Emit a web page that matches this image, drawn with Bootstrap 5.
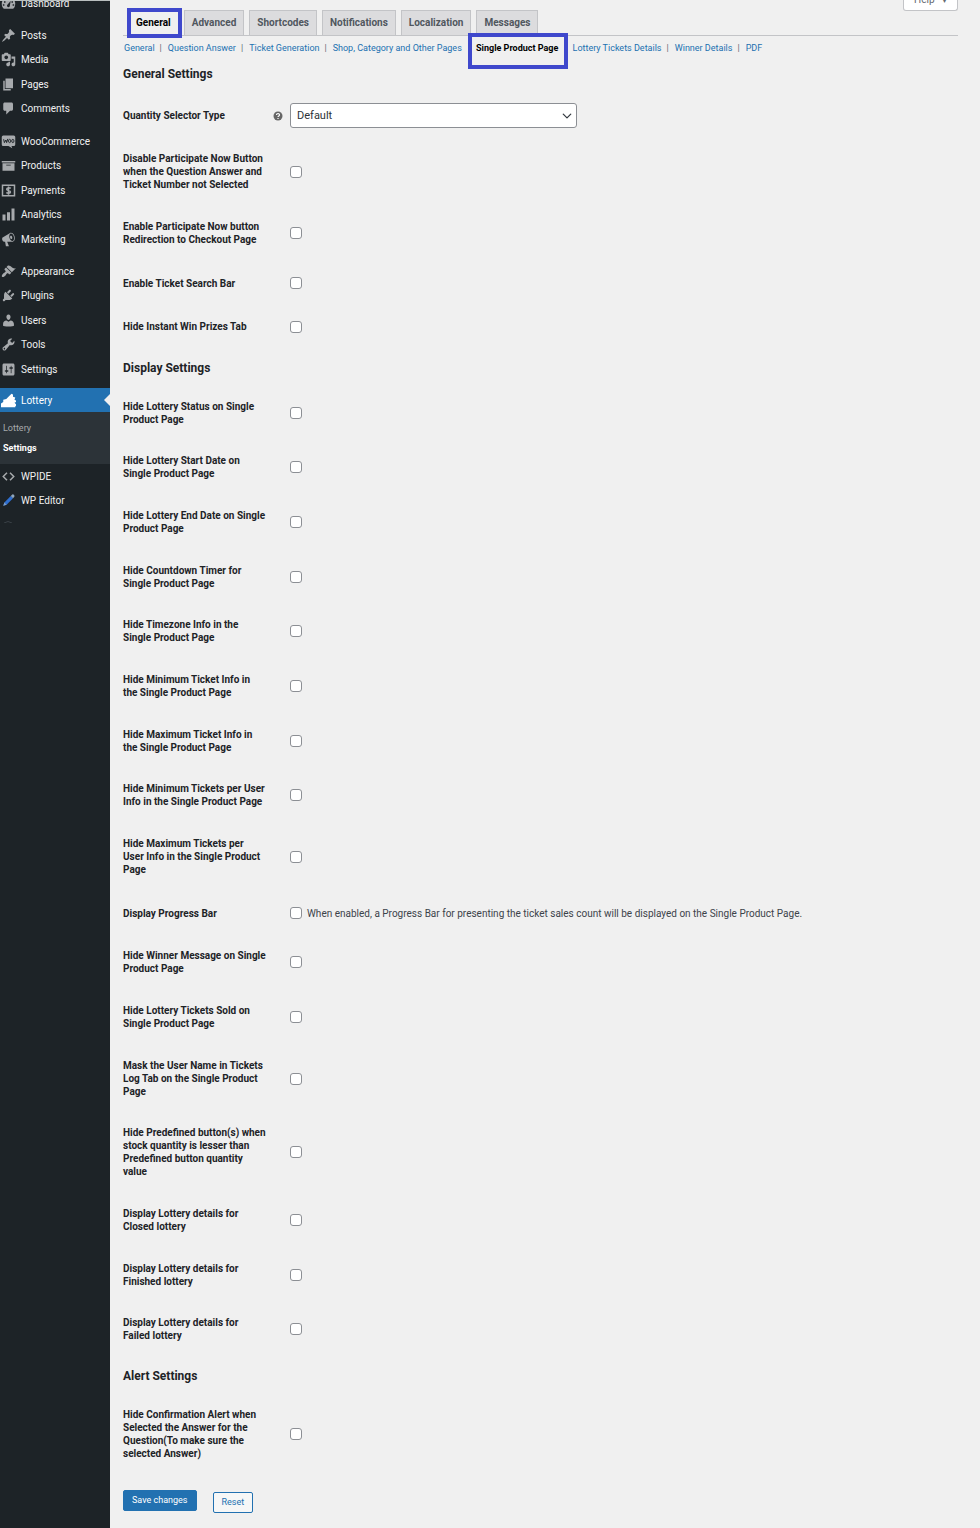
<!DOCTYPE html>
<html lang="en">
<head>
<meta charset="utf-8">
<meta name="viewport" content="width=device-width, initial-scale=1">
<title>Lottery Settings</title>
<link href="https://cdn.jsdelivr.net/npm/bootstrap@5.3.0/dist/css/bootstrap.min.css" rel="stylesheet">
<style>
body { font-family: Roboto, sans-serif; font-size: 10px; line-height: 13px; background: #f0f0f0; color: #3c434a; }
a { text-decoration: none; }

/* admin menu */
.admin-menu { flex: 0 0 110px; background: #1d2327; border-top: 1px solid #b9bfbf; overflow: hidden; font-size: 10px; }
.admin-menu ul { margin-bottom: 8px; }
.admin-menu ul.menu-first { margin-top: -10px; }
.admin-menu ul.menu-tight { margin-bottom: 7px; }
.menu-link { display: flex; align-items: center; height: 24px; gap: 5px; padding-left: 1px; color: #f0f0f1; }
.menu-list > li:nth-child(even) .menu-link { height: 25px; }
.menu-link svg { width: 15px; height: 15px; fill: #a7aaad; flex: none; }
.menu-current { background: #2271b1; position: relative; color: #fff; }
.menu-current svg { fill: #fff; }
.menu-current::after { content: ""; position: absolute; right: 0; top: 6px; border: 6px solid transparent; border-right-color: #f0f0f0; border-left: 0; }
.submenu { background: #2c3338; padding: 6px 0 6px 3px; font-size: 9px; }
.submenu a { display: block; line-height: 20px; color: #a7aaad; }
.submenu a.submenu-current { color: #fff; font-weight: 700; }

/* tabs */
.settings-main { padding: 0 22px 14px 13px; }
.help-toggle { height: 12px; width: 55px; padding: 0; margin-top: -1px; overflow: hidden; background: #fff; border: 1px solid #c3c4c7; border-top: 0; border-radius: 0 0 3px 3px; color: #646970; font-size: 10px; line-height: 2px; }
.help-toggle span { display: block; height: 11px; }
.tab-bar { border-bottom: 1px solid #c3c4c7; gap: 5px; padding-left: 5px; margin-top: -1px; font-size: 10px; font-weight: 700; }
.tab-bar a { background: #dcdcde; border: 1px solid #c3c4c7; border-bottom: 0; padding: 0 7px; line-height: 24px; color: #50575e; }
.tab-bar a.tab-current { background: #f0f0f0; color: #000; border: 0; padding: 1px 8px 0; position: relative; }
.tab-current::before, .section-current::before { content: ""; position: absolute; border: 4px solid #3f48cc; }
.tab-current::before { inset: -2px -3px -3px -1px; }
.section-links { padding: 6px 0 0 1px; font-size: 9px; }
.section-links a { color: #2271b1; }
.section-links a.section-current { color: #000; font-weight: 700; position: relative; }
.section-current::before { inset: -9px -10px -14px -8px; }
.section-links .bar { color: #646970; padding: 0 6px 0 5px; }
.section-links .bar-wide { padding: 0 6px; }

/* form */
h2 { font-size: 12px; line-height: 16px; font-weight: 700; color: #1d2327; margin: 11px 0 10px; }
.field { padding: 14px 0 15px; min-height: 44px; display: flex; align-items: center; }
.field:nth-child(3n+1) { padding-bottom: 14px; }
.field.field-select { padding: 11px 0 10px; }
.field-name { width: 143px; margin-right: 3px; flex: none; font-weight: 700; color: #1d2327; }
.field-help { width: 21px; flex: none; padding-left: 4px; }
.field-help svg { display: block; }
.field .form-check-input { margin: 0 5px 0 0; width: 12px; height: 12px; border: 1px solid #8c8f94; border-radius: 3px; flex: none; background-color: #fff; }
.field .form-select { width: 287px; height: 25px; font-size: 11px; line-height: 13px; padding: 0 20px 0 6px; border: 1px solid #8c8f94; border-radius: 3px; color: #2c3338; background-size: 10px 10px; background-position: right 4px center; }
.btn-save, .btn-reset { font-size: 9px; line-height: 13px; padding: 3px 8px; border: 1px solid #2271b1; border-radius: 2px; }
.btn-save { background: #2271b1; color: #fff; }
.btn-reset { background: #f6f7f7; color: #2271b1; margin-top: 2px; }
</style>
</head>
<body>
<div class="d-flex align-items-stretch min-vh-100">
<nav class="admin-menu" aria-label="Admin menu">
  <ul class="list-unstyled menu-list menu-first">
    <li><a class="menu-link" href="#"><svg viewBox="0 0 20 20"><path fill-rule="evenodd" d="M3.760 17h12.480A8.900 8.900 0 0 0 19 10.500a9 9 0 0 0-18 0C1 13.050 2.060 15.360 3.760 17zM9 4h2v2H9zM4 7h2v2H4zM14 7h2v2h-2zM2.500 11h2v2h-2zM15.500 11h2v2h-2zM10 15a2 2 0 0 1-1.500-3.300L13 6.500l-1.200 6.300A2 2 0 0 1 10 15z"/></svg>Dashboard</a></li>
  </ul>
  <ul class="list-unstyled menu-list">
    <li><a class="menu-link" href="#"><svg viewBox="0 0 20 20"><path d="M10.440 3.020l1.820-1.820 6.360 6.350-1.830 1.820c-1.050-.68-2.480-.57-3.410.36l-.75.75c-.92.93-1.040 2.350-.35 3.410l-1.830 1.820-2.410-2.410-2.800 2.790c-.42.42-3.380 2.710-3.800 2.290s1.860-3.390 2.280-3.810l2.790-2.790L4.100 9.360l1.830-1.820c1.050.69 2.480.57 3.400-.36l.75-.75c.93-.92 1.050-2.350.36-3.410z"/></svg>Posts</a></li>
    <li><a class="menu-link" href="#"><svg viewBox="0 0 20 20"><path d="M13 11V4c0-.55-.45-1-1-1h-1.670L9 1H5L3.670 3H2c-.55 0-1 .45-1 1v7c0 .55.45 1 1 1h10c.55 0 1-.45 1-1zM7 4.500c1.380 0 2.500 1.120 2.500 2.500S8.380 9.500 7 9.500 4.500 8.380 4.500 7 5.620 4.500 7 4.500zM14 6h5v10.500c0 1.380-1.120 2.500-2.500 2.500S14 17.880 14 16.500s1.120-2.500 2.500-2.500c.17 0 .34.02.5.05V9h-3V6zm-4 8.050V13h2v3.500c0 1.380-1.120 2.500-2.500 2.500S7 17.880 7 16.500 8.120 14 9.500 14c.17 0 .34.02.5.05z"/></svg>Media</a></li>
    <li><a class="menu-link" href="#"><svg viewBox="0 0 20 20"><path d="M6 15V2h10v13H6zm-1 1h8v2H3V5h2v11z"/></svg>Pages</a></li>
    <li><a class="menu-link" href="#"><svg viewBox="0 0 20 20"><path d="M5 2h9c1.100 0 2 .9 2 2v7c0 1.100-.9 2-2 2h-2l-5 5v-5H5c-1.100 0-2-.9-2-2V4c0-1.100.9-2 2-2z"/></svg>Comments</a></li>
  </ul>
  <ul class="list-unstyled menu-list">
    <li><a class="menu-link" href="#"><svg viewBox="0 0 20 20"><path d="M3 2h14q2 0 2 2v10q0 2-2 2h-3l1 3-5-3H3q-2 0-2-2V4q0-2 2-2z"/><path d="M3.500 7l1 4.500 2-3.500 1 3.500L9 6.500" fill="none" stroke="#1d2327" stroke-width="1.300"/><ellipse cx="11.500" cy="9.300" rx="1.500" ry="2.200" fill="none" stroke="#1d2327" stroke-width="1.200"/><ellipse cx="15.800" cy="9.300" rx="1.500" ry="2.200" fill="none" stroke="#1d2327" stroke-width="1.200"/></svg>WooCommerce</a></li>
    <li><a class="menu-link" href="#"><svg viewBox="0 0 20 20"><path d="M19 4v2H1V4h18zM2 7h16v10H2V7zm11 3V9H7v1h6z"/></svg>Products</a></li>
    <li><a class="menu-link" href="#"><svg viewBox="0 0 20 20"><path fill-rule="evenodd" d="M1 2h18v16H1zM3 4v12h14V4z"/><path d="M13 7.200C12 6.200 7.600 6 7.600 8.200s5 1.500 5 3.700-4.300 2-5.500.8M10 4.500v11" fill="none" stroke="#a7aaad" stroke-width="2"/></svg>Payments</a></li>
    <li><a class="menu-link" href="#"><svg viewBox="0 0 20 20"><path d="M18 18V2h-4v16h4zm-6 0V7H8v11h4zm-6 0v-8H2v8h4z"/></svg>Analytics</a></li>
    <li><a class="menu-link" href="#"><svg viewBox="0 0 20 20"><path d="M18.150 5.940c.46 1.620.38 3.220-.02 4.480-.42 1.280-1.260 2.180-2.300 2.480-.16.06-.26.06-.4.06-.06.02-.12.02-.18.02-.06.02-.14.02-.22.02h-6.800l2.220 5.500c.02.14-.06.26-.14.34-.08.1-.24.16-.34.16H6.950c-.1 0-.26-.06-.34-.16-.08-.08-.16-.2-.14-.34l-1-5.500H4.250l-.02-.02c-.5.06-1.080-.18-1.540-.62s-.88-1.080-1.060-1.880c-.24-.8-.2-1.560-.02-2.200.18-.62.58-1.080 1.060-1.300l.02-.02 9-5.400c.1-.06.18-.1.24-.16.06-.04.14-.08.24-.12.16-.08.28-.12.5-.18 1.040-.3 2.240.1 3.220.98s1.840 2.240 2.260 3.860zm-2.580 5.980h-.02c.4-.1.74-.34 1.040-.7.58-.7.86-1.760.86-3.040 0-.64-.1-1.300-.28-1.980-.34-1.360-1.020-2.500-1.780-3.240s-1.680-1.100-2.460-.88c-.82.22-1.400.96-1.700 2-.32 1.040-.28 2.360.06 3.720.38 1.360 1 2.500 1.800 3.240.78.74 1.620 1.100 2.480.88zm-2.540-7.080c.22-.04.42-.02.62.04.38.16.76.48 1.020 1s.42 1.200.42 1.780c0 .3-.04.56-.12.8-.18.48-.44.84-.86.94-.34.1-.8-.06-1.140-.4s-.64-.86-.78-1.500c-.18-.62-.12-1.240.02-1.720s.48-.84.82-.94z"/></svg>Marketing</a></li>
  </ul>
  <ul class="list-unstyled menu-list menu-tight">
    <li><a class="menu-link" href="#"><svg viewBox="0 0 20 20"><path d="M14.480 11.060L7.410 3.990l1.500-1.500c.5-.56 2.300-.47 3.510.32 1.210.8 1.430 1.280 2.910 2.100 1.180.64 2.450 1.260 4.450.85zm-.71.71L6.700 4.700 4.930 6.470c-.39.39-.39 1.020 0 1.410l1.060 1.060c.39.39.39 1.030 0 1.420-.6.6-1.430 1.110-2.210 1.690-.35.26-.7.53-1.010.84C1.430 14.230.4 16.080 1.400 17.070c.99 1 2.840-.03 4.180-1.360.31-.31.58-.66.85-1.020.57-.78 1.080-1.610 1.690-2.210.39-.39 1.020-.39 1.410 0l1.060 1.060c.39.39 1.020.39 1.410 0z"/></svg>Appearance</a></li>
    <li><a class="menu-link" href="#"><svg viewBox="0 0 20 20"><path d="M13.110 4.360L9.870 7.600 8 5.730l3.240-3.240c.35-.34 1.050-.2 1.560.32.52.51.66 1.210.31 1.550zm-8 1.770l.91-1.120 9.010 9.010-1.190.84c-.71.71-2.630 1.160-3.820 1.160H6.140L4.900 17.260c-.59.59-1.540.59-2.120 0-.59-.58-.59-1.530 0-2.120l1.240-1.240v-3.880c0-1.130.4-3.190 1.090-3.890zm7.260 3.970l3.240-3.240c.34-.35 1.040-.21 1.550.31.52.51.66 1.210.31 1.550l-3.240 3.250z"/></svg>Plugins</a></li>
    <li><a class="menu-link" href="#"><svg viewBox="0 0 20 20"><path d="M10 9.250c-2.270 0-2.730-3.440-2.730-3.440C7 4.020 7.820 2 9.970 2c2.160 0 2.980 2.020 2.710 3.810 0 0-.41 3.440-2.680 3.440zm0 2.570L12.720 10c2.390 0 4.520 2.330 4.520 4.530v2.490s-3.650 1.130-7.240 1.130c-3.650 0-7.240-1.130-7.240-1.130v-2.490c0-2.250 1.940-4.480 4.470-4.480z"/></svg>Users</a></li>
    <li><a class="menu-link" href="#"><svg viewBox="0 0 20 20"><path d="M16.680 9.770c-1.340 1.340-3.300 1.670-4.950.99l-5.410 6.520c-.99.99-2.590.99-3.580 0s-.99-2.590 0-3.570l6.520-5.420c-.68-1.650-.35-3.610.99-4.950 1.280-1.280 3.120-1.620 4.720-1.060l-2.890 2.890 2.820 2.820 2.860-2.870c.53 1.580.18 3.390-1.080 4.650zM3.810 16.210c.4.39 1.040.39 1.430 0 .4-.4.4-1.040 0-1.430-.39-.4-1.030-.4-1.430 0-.39.39-.39 1.030 0 1.430z"/></svg>Tools</a></li>
    <li><a class="menu-link" href="#"><svg viewBox="0 0 20 20"><path d="M18 16V4c0-1.100-.9-2-2-2H4c-1.100 0-2 .9-2 2v12c0 1.100.9 2 2 2h12c1.100 0 2-.9 2-2zM8 11h1c.55 0 1 .45 1 1s-.45 1-1 1H8v1.500c0 .28-.22.5-.5.5s-.5-.22-.5-.5V13H6c-.55 0-1-.45-1-1s.45-1 1-1h1V5.500c0-.28.22-.5.5-.5s.5.22.5.5V11zm5-2h-1c-.55 0-1-.45-1-1s.45-1 1-1h1V5.500c0-.28.22-.5.5-.5s.5.22.5.5V7h1c.55 0 1 .45 1 1s-.45 1-1 1h-1v5.500c0 .28-.22.5-.5.5s-.5-.22-.5-.5V9z"/></svg>Settings</a></li>
  </ul>
  <a class="menu-link menu-current" href="#"><svg viewBox="0 0 20 20"><path d="M0 19v-5l3-2V9l4-1 4-4 3-3 2 1v3l3 1-1 3 2 1v2l-2 1 2 2v2l-1 1v1z"/></svg>Lottery</a>
  <div class="submenu">
    <a href="#">Lottery</a>
    <a class="submenu-current" href="#">Settings</a>
  </div>
  <ul class="list-unstyled menu-list">
    <li><a class="menu-link" href="#"><svg viewBox="0 0 20 20"><path d="M8 5l-5 5 5 5M12 5l5 5-5 5" fill="none" stroke="#a7aaad" stroke-width="2"/></svg>WPIDE</a></li>
    <li><a class="menu-link" href="#"><svg viewBox="0 0 20 20"><path d="M3 17l1.500-4.500L13 4l3 3-8.500 8.500z" fill="#2f6fd0"/><path d="M13 4l2-2q1-.8 2.200.4T17.800 5L16 7z" fill="#8fa6bd"/><path d="M3 17l1.500-4.500 3 3z" fill="#7d9cc4"/></svg>WP Editor</a></li>
  </ul>
  <svg class="d-block" width="16" height="2" viewBox="0 0 16 2" aria-hidden="true"><path d="M4 2q4-3 8 0" fill="none" stroke="#3a4147"/></svg>
</nav>

<main class="settings-main flex-grow-1">
  <div class="d-flex justify-content-end"><button class="help-toggle" type="button"><span>Help &nbsp; ▾</span></button></div>
  <nav class="tab-bar d-flex" aria-label="Settings tabs">
    <a class="tab-current" href="#">General</a>
    <a href="#">Advanced</a>
    <a href="#">Shortcodes</a>
    <a href="#">Notifications</a>
    <a href="#">Localization</a>
    <a href="#">Messages</a>
  </nav>
  <nav class="section-links d-flex" aria-label="Sections">
    <a href="#">General</a><span class="bar">|</span>
    <a href="#">Question Answer</a><span class="bar">|</span>
    <a href="#">Ticket Generation</a><span class="bar">|</span>
    <a href="#">Shop, Category and Other Pages</a><span class="bar bar-wide">&nbsp;</span>
    <a class="section-current" href="#">Single Product Page</a><span class="bar bar-wide">&nbsp;</span>
    <a href="#">Lottery Tickets Details</a><span class="bar">|</span>
    <a href="#">Winner Details</a><span class="bar">|</span>
    <a href="#">PDF</a>
  </nav>

  <form>
    <h2>General Settings</h2>
    <div>
      <div class="field field-select"><label class="field-name" for="f0">Quantity Selector Type</label><span class="field-help"><svg width="10" height="10" viewBox="0 0 10 10"><circle cx="5" cy="5" r="4.500" fill="#666"/><path d="M3.500 4c0-2 3.100-1.900 3 0 0 .9-1.500 1-1.500 2M5 7v1.100" fill="none" stroke="#fff" stroke-width="1.200"/></svg></span><select class="form-select" id="f0"><option>Default</option></select></div>
      <div class="field"><label class="field-name" for="f1">Disable Participate Now Button when the Question Answer and Ticket Number not Selected</label><span class="field-help"></span><input class="form-check-input" type="checkbox" id="f1"></div>
      <div class="field"><label class="field-name" for="f2">Enable Participate Now button Redirection to Checkout Page</label><span class="field-help"></span><input class="form-check-input" type="checkbox" id="f2"></div>
      <div class="field"><label class="field-name" for="f3">Enable Ticket Search Bar</label><span class="field-help"></span><input class="form-check-input" type="checkbox" id="f3"></div>
      <div class="field"><label class="field-name" for="f4">Hide Instant Win Prizes Tab</label><span class="field-help"></span><input class="form-check-input" type="checkbox" id="f4"></div>
    </div>

    <h2>Display Settings</h2>
    <div>
      <div class="field"><label class="field-name" for="f5">Hide Lottery Status on Single Product Page</label><span class="field-help"></span><input class="form-check-input" type="checkbox" id="f5"></div>
      <div class="field"><label class="field-name" for="f6">Hide Lottery Start Date on Single Product Page</label><span class="field-help"></span><input class="form-check-input" type="checkbox" id="f6"></div>
      <div class="field"><label class="field-name" for="f7">Hide Lottery End Date on Single Product Page</label><span class="field-help"></span><input class="form-check-input" type="checkbox" id="f7"></div>
      <div class="field"><label class="field-name" for="f8">Hide Countdown Timer for Single Product Page</label><span class="field-help"></span><input class="form-check-input" type="checkbox" id="f8"></div>
      <div class="field"><label class="field-name" for="f9">Hide Timezone Info in the Single Product Page</label><span class="field-help"></span><input class="form-check-input" type="checkbox" id="f9"></div>
      <div class="field"><label class="field-name" for="f10">Hide Minimum Ticket Info in the Single Product Page</label><span class="field-help"></span><input class="form-check-input" type="checkbox" id="f10"></div>
      <div class="field"><label class="field-name" for="f11">Hide Maximum Ticket Info in the Single Product Page</label><span class="field-help"></span><input class="form-check-input" type="checkbox" id="f11"></div>
      <div class="field"><label class="field-name" for="f12">Hide Minimum Tickets per User Info in the Single Product Page</label><span class="field-help"></span><input class="form-check-input" type="checkbox" id="f12"></div>
      <div class="field"><label class="field-name" for="f13">Hide Maximum Tickets per User Info in the Single Product Page</label><span class="field-help"></span><input class="form-check-input" type="checkbox" id="f13"></div>
      <div class="field"><label class="field-name" for="f14">Display Progress Bar</label><span class="field-help"></span><input class="form-check-input" type="checkbox" id="f14" aria-describedby="d14"><span id="d14">When enabled, a Progress Bar for presenting the ticket sales count will be displayed on the Single Product Page.</span></div>
      <div class="field"><label class="field-name" for="f15">Hide Winner Message on Single Product Page</label><span class="field-help"></span><input class="form-check-input" type="checkbox" id="f15"></div>
      <div class="field"><label class="field-name" for="f16">Hide Lottery Tickets Sold on Single Product Page</label><span class="field-help"></span><input class="form-check-input" type="checkbox" id="f16"></div>
      <div class="field"><label class="field-name" for="f17">Mask the User Name in Tickets Log Tab on the Single Product Page</label><span class="field-help"></span><input class="form-check-input" type="checkbox" id="f17"></div>
      <div class="field"><label class="field-name" for="f18">Hide Predefined button(s) when stock quantity is lesser than Predefined button quantity value</label><span class="field-help"></span><input class="form-check-input" type="checkbox" id="f18"></div>
      <div class="field"><label class="field-name" for="f19">Display Lottery details for Closed lottery</label><span class="field-help"></span><input class="form-check-input" type="checkbox" id="f19"></div>
      <div class="field"><label class="field-name" for="f20">Display Lottery details for Finished lottery</label><span class="field-help"></span><input class="form-check-input" type="checkbox" id="f20"></div>
      <div class="field"><label class="field-name" for="f21">Display Lottery details for Failed lottery</label><span class="field-help"></span><input class="form-check-input" type="checkbox" id="f21"></div>
    </div>

    <h2>Alert Settings</h2>
    <div>
      <div class="field"><label class="field-name" for="f22">Hide Confirmation Alert when Selected the Answer for the Question(To make sure the selected Answer)</label><span class="field-help"></span><input class="form-check-input" type="checkbox" id="f22"></div>
    </div>
    <div class="d-flex align-items-start gap-3 pt-3">
      <button class="btn-save" type="button">Save changes</button>
      <button class="btn-reset" type="reset">Reset</button>
    </div>
  </form>
</main>
</div>
<script src="https://cdn.jsdelivr.net/npm/bootstrap@5.3.0/dist/js/bootstrap.bundle.min.js"></script>
</body>
</html>
